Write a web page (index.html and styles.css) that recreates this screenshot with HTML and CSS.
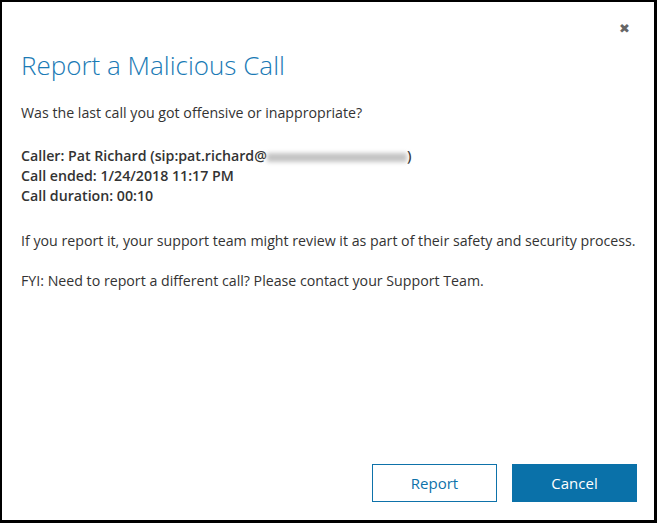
FILE: index.html
```html
<!DOCTYPE html>
<html>
<head>
<meta charset="utf-8">
<link rel="stylesheet" href="styles.css">
</head>
<body>
<div class="dialog">
  <div class="topbar">
    <span class="close">&#x2716;</span>
  </div>
  <h1 class="title">Report a Malicious Call</h1>
  <p class="question">Was the last call you got offensive or inappropriate?</p>
  <div class="details">
    <div>Caller: Pat Richard (sip:pat.richard@<span class="blur"></span>)</div>
    <div>Call ended: 1/24/2018 11:17 PM</div>
    <div>Call duration: 00:10</div>
  </div>
  <p class="info">If you report it, your support team might review it as part of their safety and security process.</p>
  <p class="info fyi">FYI: Need to report a different call? Please contact your Support Team.</p>
  <div class="footer">
    <button class="btn btn-outline">Report</button>
    <button class="btn btn-primary">Cancel</button>
  </div>
</div>
</body>
</html>
```
FILE: styles.css
```css
html, body {
  margin: 0;
  padding: 0;
  background: #fff;
}
.dialog {
  box-sizing: border-box;
  width: 657px;
  height: 523px;
  border-style: solid;
  border-color: #000;
  border-width: 2px 3px 3px 2px;
  background: #fff;
  display: flex;
  flex-direction: column;
  padding: 0 17px 18px 19px;
  font-family: "Open Sans", "Noto Sans", sans-serif;
  color: #333;
}
.topbar {
  display: flex;
  justify-content: flex-end;
  height: 48px;
}
.close {
  font-size: 13px;
  color: #666;
  margin-top: 19px;
  margin-right: 7px;
  line-height: 14px;
}
.title {
  font-weight: 300;
  font-size: 26px;
  color: #1a7ab5;
  margin: 0;
  line-height: 30px;
}
.question {
  margin: 23px 0 0 0;
  font-size: 14.2px;
  line-height: 20px;
}
.details {
  margin-top: 23px;
  font-size: 14.2px;
  font-weight: 600;
  line-height: 20px;
}
.blur {
  display: inline-block;
  width: 140px;
  height: 9px;
  background: #c4c4c4;
  filter: blur(2px);
  vertical-align: middle;
}
.info {
  margin: 25px 0 0 0;
  font-size: 14.2px;
  line-height: 20px;
}
.fyi {
  margin-top: 20px;
}
.footer {
  margin-top: auto;
  display: flex;
  justify-content: flex-end;
  gap: 15px;
}
.btn {
  box-sizing: border-box;
  width: 125px;
  height: 38px;
  font-family: "Open Sans", "Noto Sans", sans-serif;
  font-size: 15px;
  cursor: pointer;
}
.btn-outline {
  background: #fff;
  border: 1px solid #0e72aa;
  color: #0e72aa;
}
.btn-primary {
  background: #0a71a9;
  border: 1px solid #0a71a9;
  color: #fff;
}
```
